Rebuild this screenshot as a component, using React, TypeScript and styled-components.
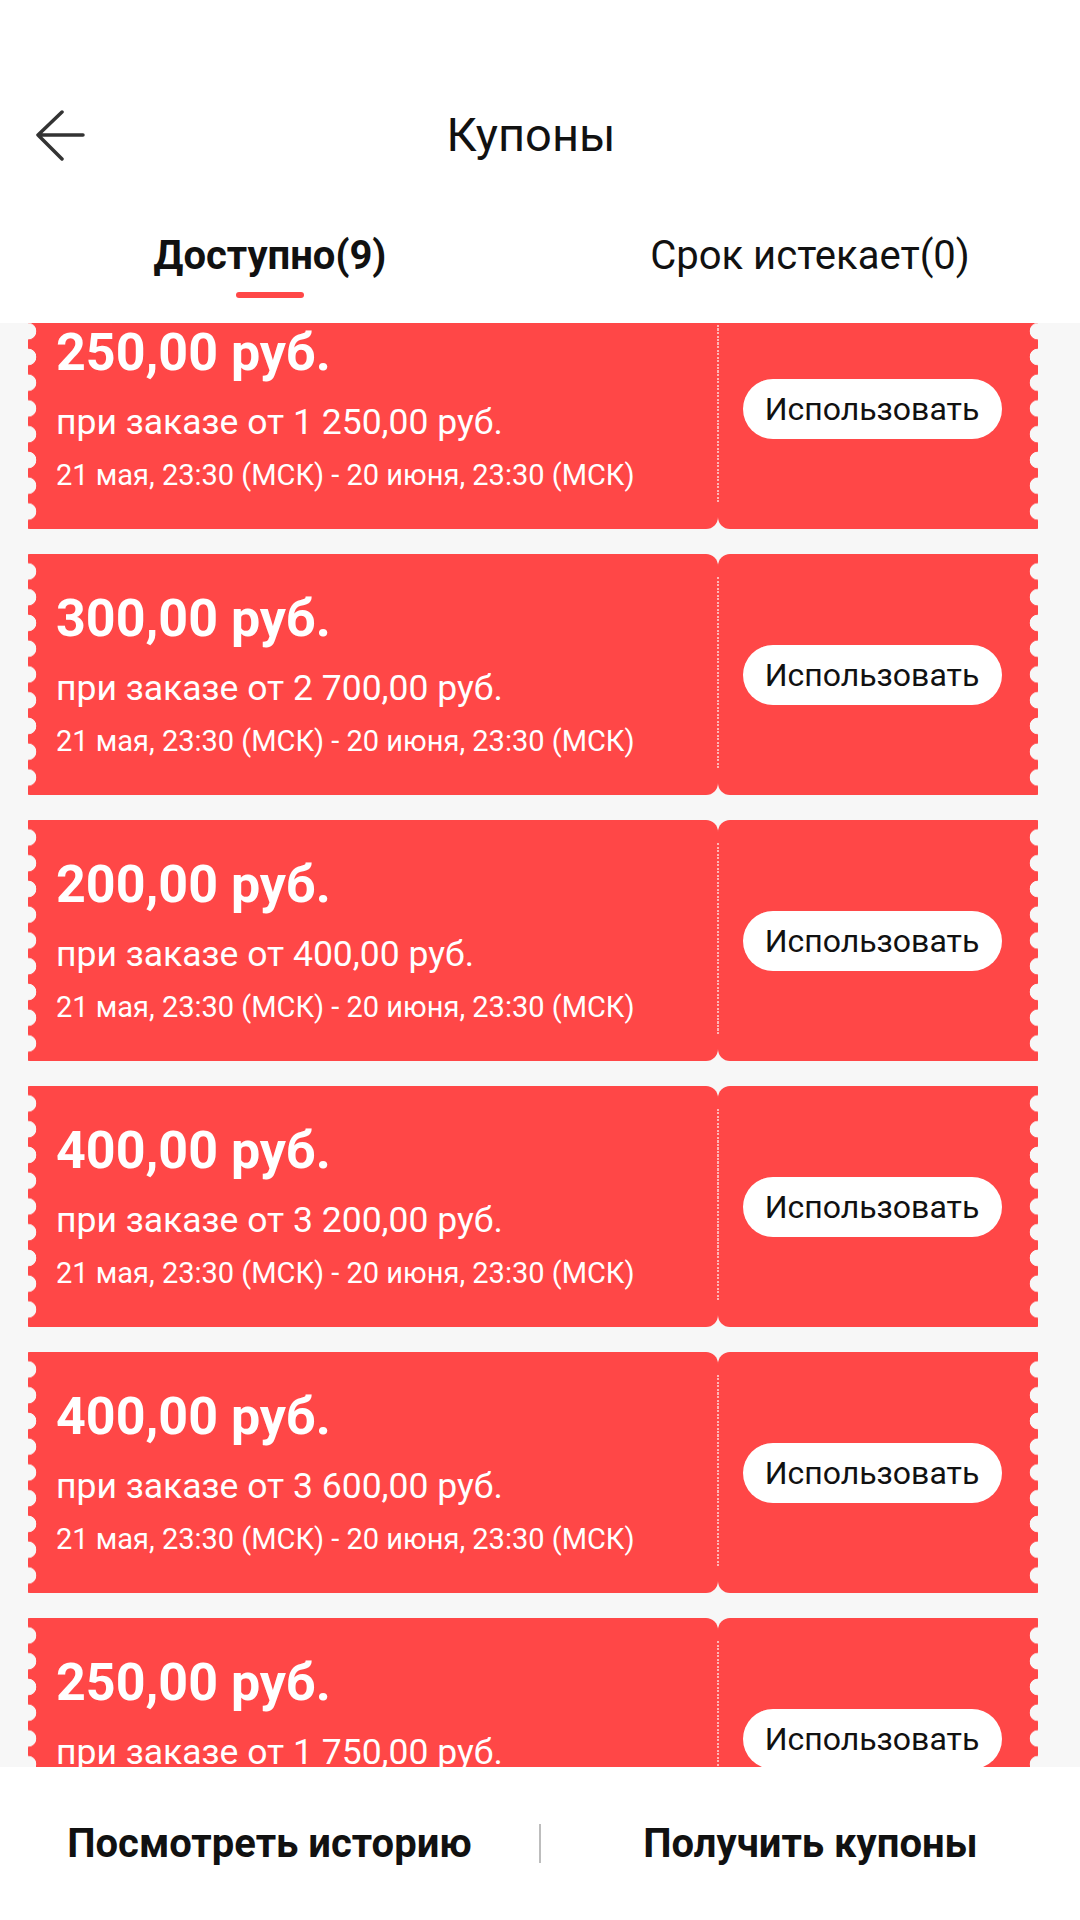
import { ReactElement } from 'react';

import styled, { createGlobalStyle } from 'styled-components';

const RED = '#ff4747';
const LIST_BG = '#f7f7f7';

interface ICoupon {
  amount: string;
  minOrder: string;
}

const coupons: ICoupon[] = [
  { amount: '250,00 руб.', minOrder: '1 250,00 руб.' },
  { amount: '300,00 руб.', minOrder: '2 700,00 руб.' },
  { amount: '200,00 руб.', minOrder: '400,00 руб.' },
  { amount: '400,00 руб.', minOrder: '3 200,00 руб.' },
  { amount: '400,00 руб.', minOrder: '3 600,00 руб.' },
  { amount: '250,00 руб.', minOrder: '1 750,00 руб.' },
];

const PERIOD = '21 мая, 23:30 (МСК) - 20 июня, 23:30 (МСК)';

function BackIcon(): ReactElement {
  return (
    <svg width="52" height="52" viewBox="0 0 52 52" fill="none">
      <path
        d="M49 26H4M28 3L4 26L28 50"
        stroke="#333"
        strokeWidth="3.5"
        strokeLinecap="round"
        strokeLinejoin="round"
      />
    </svg>
  );
}

function Coupon({ amount, minOrder }: ICoupon): ReactElement {
  return (
    <CouponCard>
      <CouponBody>
        <Amount>{amount}</Amount>
        <MinOrder>при заказе от {minOrder}</MinOrder>
        <Period>{PERIOD}</Period>
      </CouponBody>
      <CouponStub>
        <UseButton>Использовать</UseButton>
      </CouponStub>
    </CouponCard>
  );
}

export default function App(): ReactElement {
  return (
    <Page>
      <GlobalStyle />
      <Header>
        <TitleBar>
          <BackButton>
            <BackIcon />
          </BackButton>
          <Title>Купоны</Title>
          <span />
        </TitleBar>
        <Tabs>
          <Tab>
            <TabLabel $active>Доступно(9)</TabLabel>
            <TabIndicator />
          </Tab>
          <Tab>
            <TabLabel>Срок истекает(0)</TabLabel>
          </Tab>
        </Tabs>
      </Header>
      <ListViewport>
        <CouponList>
          {coupons.map((c, i) => (
            <Coupon key={i} amount={c.amount} minOrder={c.minOrder} />
          ))}
        </CouponList>
      </ListViewport>
      <BottomBar>
        <BottomAction>Посмотреть историю</BottomAction>
        <BottomDivider />
        <BottomAction>Получить купоны</BottomAction>
      </BottomBar>
    </Page>
  );
}

const GlobalStyle = createGlobalStyle`
  html, body {
    margin: 0;
    padding: 0;
    background: #fff;
  }
  body {
    font-family: Roboto, "Noto Sans", Arial, sans-serif;
    color: #111;
  }
`;

const Page = styled.div`
  width: 1080px;
  height: 1920px;
  display: flex;
  flex-direction: column;
  background: #fff;
  overflow: hidden;
`;

const Header = styled.header`
  padding-top: 80px;
  background: #fff;
`;

const TitleBar = styled.div`
  height: 110px;
  display: grid;
  grid-template-columns: 120px 1fr 138px;
  align-items: center;
`;

const BackButton = styled.div`
  display: flex;
  align-items: center;
  padding-left: 34px;
`;

const Title = styled.h1`
  margin: 0;
  text-align: center;
  font-size: 47px;
  line-height: 56px;
  font-weight: 400;
  color: #111;
`;

const Tabs = styled.nav`
  height: 133px;
  display: grid;
  grid-template-columns: 1fr 1fr;
`;

const Tab = styled.div`
  display: flex;
  flex-direction: column;
  align-items: center;
  padding-top: 42px;
`;

const TabLabel = styled.span<{ $active?: boolean }>`
  font-size: 40px;
  line-height: 47px;
  font-weight: ${(p) => (p.$active ? 700 : 400)};
  color: #111;
`;

const TabIndicator = styled.div`
  margin-top: 13px;
  width: 68px;
  height: 6px;
  border-radius: 3px;
  background: ${RED};
`;

const ListViewport = styled.main`
  flex: 1;
  overflow: hidden;
  background: ${LIST_BG};
`;

const CouponList = styled.div`
  margin-top: -35px;
  padding: 0 42px 0 28px;
  display: flex;
  flex-direction: column;
  gap: 25px;
`;

const CouponCard = styled.div`
  height: 241px;
  display: flex;
`;

const scallops = (side: 'left' | 'right') => `
  radial-gradient(circle at ${side === 'left' ? '0' : '100%'} 50%, ${LIST_BG} 8px, transparent 8.6px)
    ${side === 'left' ? '0' : '100%'} 4.6px / 20px 25.75px repeat-y,
  ${RED}
`;

const CouponBody = styled.div`
  flex: 0 0 690px;
  box-sizing: border-box;
  padding: 35px 0 0 28px;
  display: flex;
  flex-direction: column;
  background: ${scallops('left')};
  border-radius: 0 12px 12px 0;
  color: #fff;
`;

const Amount = styled.div`
  font-size: 52px;
  line-height: 60px;
  font-weight: 700;
`;

const MinOrder = styled.div`
  margin-top: 18px;
  font-size: 35.5px;
  line-height: 42px;
`;

const Period = styled.div`
  margin-top: 14px;
  font-size: 29px;
  line-height: 36px;
`;

const CouponStub = styled.div`
  position: relative;
  flex: 1;
  box-sizing: border-box;
  padding-right: 12px;
  display: flex;
  align-items: center;
  justify-content: center;
  background: ${scallops('right')};
  border-radius: 12px 0 0 12px;

  &::before {
    content: '';
    position: absolute;
    left: -1px;
    top: 23px;
    bottom: 27px;
    width: 2px;
    background: repeating-linear-gradient(
      to bottom,
      rgba(255, 255, 255, 0.6) 0 2px,
      transparent 2px 3.5px
    );
  }
`;

const UseButton = styled.button`
  height: 60px;
  width: 259px;
  border: none;
  border-radius: 30px;
  background: #fff;
  color: #111;
  font-family: Roboto, "Noto Sans", Arial, sans-serif;
  font-size: 32px;
  padding: 0;
`;

const BottomBar = styled.footer`
  height: 153px;
  flex-shrink: 0;
  display: grid;
  grid-template-columns: 1fr 2px 1fr;
  align-items: center;
  background: #fff;
`;

const BottomAction = styled.div`
  text-align: center;
  font-size: 40px;
  font-weight: 700;
  color: #111;
`;

const BottomDivider = styled.div`
  height: 39px;
  background: #bdbdbd;
`;
